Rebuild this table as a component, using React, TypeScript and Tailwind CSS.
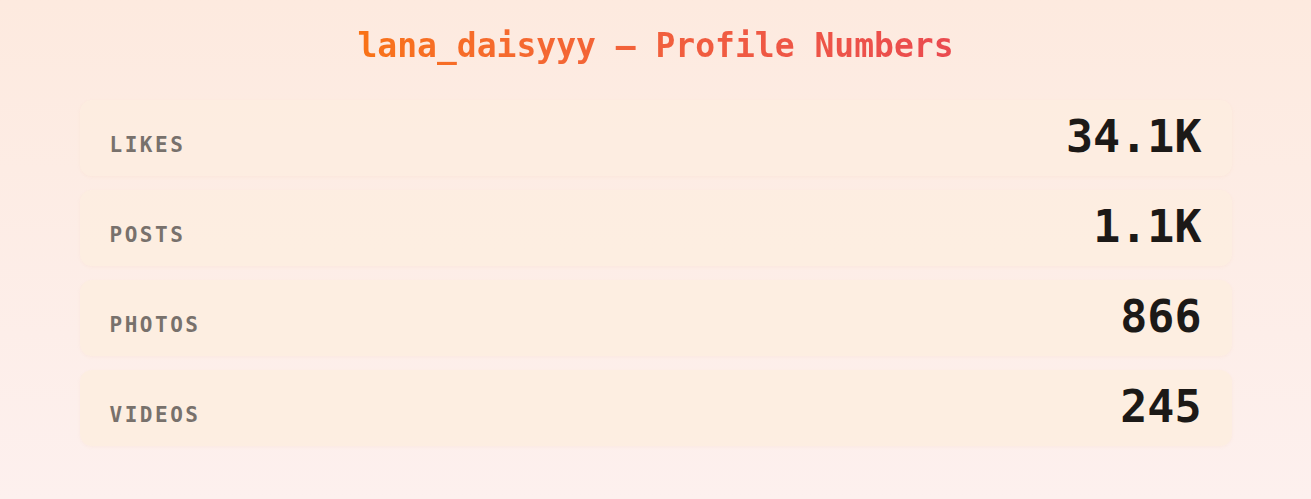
import React from "react";

const stats = [
  { label: "LIKES", value: "34.1K" },
  { label: "POSTS", value: "1.1K" },
  { label: "PHOTOS", value: "866" },
  { label: "VIDEOS", value: "245" },
];

export default function App() {
  return (
    <div
      className="min-h-[499px] w-full bg-gradient-to-b from-[#fdeadf] to-[#fdf0ee] pt-[26px] pb-[40px]"
      style={{ fontFamily: '"DejaVu Sans Mono", "Liberation Mono", monospace' }}
    >
      <h1 className="text-center text-[33px] leading-[40px] font-bold">
        <span className="bg-gradient-to-r from-[#f97316] to-[#ea4a4f] bg-clip-text text-transparent">
          lana_daisyyy — Profile Numbers
        </span>
      </h1>
      <div className="mx-auto mt-[34px] flex max-w-[1152px] flex-col gap-[14px]">
        {stats.map((s) => (
          <div
            key={s.label}
            className="flex h-[76px] items-center rounded-xl bg-[#fdede0]/90 px-[30px] shadow-[0_1px_3px_rgba(240,200,170,0.15)]"
          >
            <div className="flex w-full items-baseline justify-between">
              <span className="text-[21px] font-bold tracking-[0.12em] text-[#78716c]">
                {s.label}
              </span>
              <span className="text-[45px] leading-none font-bold text-[#1c1917]">
                {s.value}
              </span>
            </div>
          </div>
        ))}
      </div>
    </div>
  );
}
